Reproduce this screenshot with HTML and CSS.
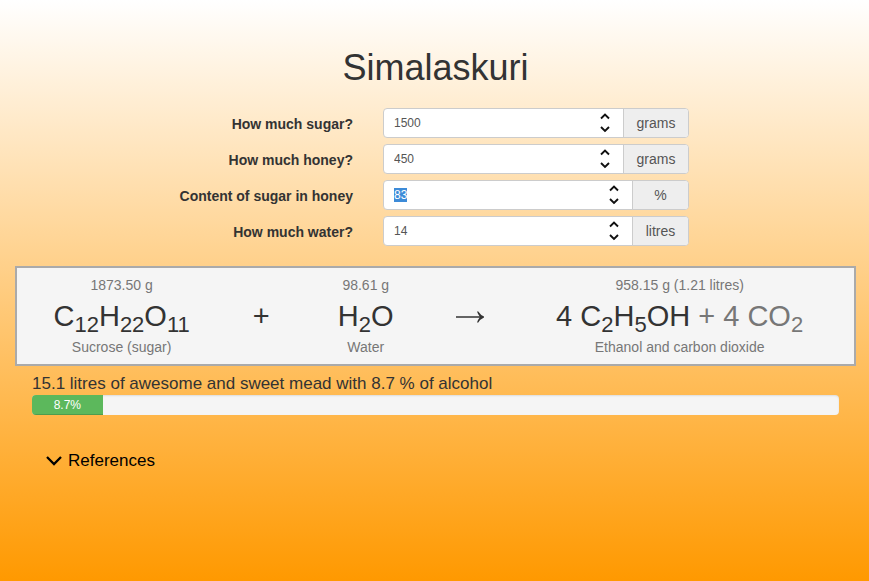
FILE: index.html
```html
<!DOCTYPE html>
<html lang="en">
<head>
<meta charset="utf-8">
<meta name="viewport" content="width=device-width, initial-scale=1">
<title>Simalaskuri</title>
<link rel="stylesheet" href="styles.css">
</head>
<body>
<svg class="sprite" aria-hidden="true">
  <symbol id="spin" viewBox="0 0 10 20">
    <path d="M1 5.5 5 1.5 9 5.5M1 14 5 18 9 14" fill="none" stroke="currentColor" stroke-width="1.9"/>
  </symbol>
</svg>
<main class="page">
  <h1 class="title">Simalaskuri</h1>

  <form class="form">
    <label class="label" for="sugar">How much sugar?</label>
    <div class="group">
      <div class="field"><input class="input" id="sugar" type="number" value="1500"><svg class="spinner" aria-hidden="true"><use href="#spin"/></svg></div>
      <span class="unit">grams</span>
    </div>
    <label class="label" for="honey">How much honey?</label>
    <div class="group">
      <div class="field"><input class="input" id="honey" type="number" value="450"><svg class="spinner" aria-hidden="true"><use href="#spin"/></svg></div>
      <span class="unit">grams</span>
    </div>
    <label class="label" for="content">Content of sugar in honey</label>
    <div class="group">
      <div class="field"><input class="input" id="content" type="number" value="83"><svg class="spinner" aria-hidden="true"><use href="#spin"/></svg></div>
      <span class="unit unit-short">%</span>
    </div>
    <label class="label" for="water">How much water?</label>
    <div class="group">
      <div class="field"><input class="input" id="water" type="number" value="14"><svg class="spinner" aria-hidden="true"><use href="#spin"/></svg></div>
      <span class="unit unit-short">litres</span>
    </div>
  </form>

  <section class="reaction">
    <div class="term">
      <div class="note">1873.50 g</div>
      <div class="formula">C<sub>12</sub>H<sub>22</sub>O<sub>11</sub></div>
      <div class="note">Sucrose (sugar)</div>
    </div>
    <div class="operator">+</div>
    <div class="term">
      <div class="note">98.61 g</div>
      <div class="formula">H<sub>2</sub>O</div>
      <div class="note">Water</div>
    </div>
    <div class="operator"><svg class="arrow" viewBox="0 0 28 14" role="img" aria-label="yields"><path d="M0 8H26" fill="none" stroke="currentColor" stroke-width="1.5"/><path d="M21 2.5 22.3 2.5Q24.5 6 28 7.5V8.5Q24.5 10 22.3 13.5H21Q22 10.5 24 8Q22 5.5 21 2.5Z" fill="currentColor"/></svg></div>
    <div class="term">
      <div class="note">958.15 g (1.21 litres)</div>
      <div class="formula">4 C<sub>2</sub>H<sub>5</sub>OH <span class="muted">+ 4 CO<sub>2</sub></span></div>
      <div class="note">Ethanol and carbon dioxide</div>
    </div>
  </section>

  <section class="result">
    <p class="summary">15.1 litres of awesome and sweet mead with 8.7 % of alcohol</p>
    <div class="progress"><div class="bar" style="width: 8.75%">8.7%</div></div>
    <button class="references" type="button"><svg class="chevron" viewBox="0 0 16 10" aria-hidden="true"><path d="M1 1 8 8 15 1" fill="none" stroke="currentColor" stroke-width="2.3"/></svg>References</button>
  </section>
</main>
<script src="main.js"></script>
</body>
</html>
```
FILE: styles.css
```css
* {
  box-sizing: border-box;
}

body {
  margin: 0;
  min-height: 100vh;
  background: linear-gradient(#fff, #f90);
  color: #333;
  font: 14px/20px "Liberation Sans", Arial, sans-serif;
}

.sprite {
  display: none;
}

.page {
  padding: 48px 13px 24px 15px;
}

.title {
  margin: 0 0 20px;
  font-size: 36px;
  font-weight: 400;
  line-height: 40px;
  text-align: center;
}

.form {
  display: grid;
  grid-template-columns: 338fr 336fr 167fr;
  row-gap: 6px;
}

.label {
  grid-column: 1;
  padding-top: 6px;
  font-weight: 700;
  text-align: right;
}

.group {
  grid-column: 2;
  display: flex;
  height: 30px;
  margin-left: 30px;
  border: 1px solid #ccc;
  border-radius: 4px;
  background: #fff;
  overflow: hidden;
}

.field {
  flex: 1;
  min-width: 0;
  display: flex;
  align-items: center;
  padding: 0 13px 0 10px;
}

.input {
  flex: 1;
  min-width: 0;
  height: 28px;
  padding: 0;
  border: 0;
  outline: 0;
  background: transparent;
  color: #555;
  font: 12px/18px "Liberation Sans", Arial, sans-serif;
  appearance: textfield;
}

.input::-webkit-inner-spin-button {
  appearance: none;
  margin: 0;
}

.input::selection {
  background: #3d8bd8;
  color: #fff;
}

.spinner {
  width: 10px;
  height: 20px;
  color: #111;
}

.unit {
  min-width: 65px;
  padding: 4px 12px;
  border-left: 1px solid #ccc;
  background: #eee;
  color: #555;
  text-align: center;
}

.unit-short {
  min-width: 56px;
}

.reaction {
  display: grid;
  grid-template-columns: 3fr 1fr 2fr 1fr 5fr;
  align-items: center;
  margin-top: 20px;
  padding: 7px 0;
  border: 2px solid #aaa;
  background: #f5f5f5;
  text-align: center;
}

.note,
.muted {
  color: #777;
}

.formula,
.operator {
  font-size: 29px;
  line-height: 42px;
}

.formula {
  white-space: nowrap;
}

.formula sub {
  position: relative;
  bottom: -6px;
  font-size: 22px;
  line-height: 0;
  vertical-align: baseline;
}

.operator {
  display: flex;
  align-items: center;
  justify-content: center;
}

.arrow {
  width: 28px;
  height: 14px;
}

.result {
  padding: 7px 17px 0;
}

.summary {
  margin: 0;
  font-size: 17px;
  line-height: 22px;
}

.progress {
  height: 20px;
  border-radius: 4px;
  background: #f5f5f5;
  box-shadow: inset 0 1px 2px rgba(0, 0, 0, .1);
  overflow: hidden;
}

.bar {
  height: 100%;
  background: #5cb85c;
  box-shadow: inset 0 -1px 0 rgba(0, 0, 0, .15);
  color: #fff;
  font-size: 12px;
  text-align: center;
}

.references {
  display: flex;
  align-items: center;
  gap: 6px;
  margin: 35px 0 0 14px;
  padding: 0;
  border: 0;
  background: none;
  color: #000;
  font: 17px/22px "Liberation Sans", Arial, sans-serif;
}

.chevron {
  width: 16px;
  height: 10px;
}
```
FILE: main.js
```js
const content = document.getElementById("content");
content.focus();
content.select();
```
